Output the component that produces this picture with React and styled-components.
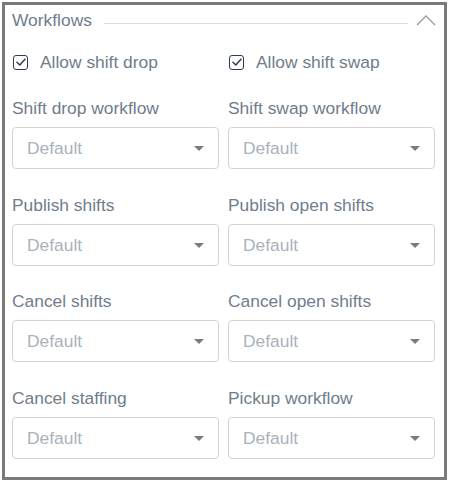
import styled, { createGlobalStyle } from 'styled-components';

const Global = createGlobalStyle`
    body {
        margin: 0;
        background: #ffffff;
        font-family: 'Liberation Sans', Arial, sans-serif;
    }
`;

const Frame = styled.div`
    box-sizing: border-box;
    width: 445px;
    height: 478px;
    margin: 2px 0 0 2px;
    border: 3px solid #7a7a7a;
    padding: 5px 8px 0 7px;
    background: #fff;
`;

const Header = styled.div`
    display: flex;
    align-items: center;
    height: 20px;
    margin-bottom: 22px;
`;

const Title = styled.span`
    font-size: 17.4px;
    line-height: 20px;
    color: #6f7d8c;
`;

const Rule = styled.div`
    flex: 1;
    height: 1px;
    margin: 6px 8px 0 12px;
    background: #dcdcdc;
`;

const Columns = styled.div`
    display: grid;
    grid-template-columns: 207px 207px;
    column-gap: 9px;
    row-gap: ${({ rowGap }) => rowGap || '0px'};
    margin-bottom: ${({ bottom }) => bottom || '0px'};
`;

const CheckLabel = styled.label`
    display: flex;
    align-items: center;
    gap: 12px;
    height: 20px;
    padding-left: 1px;
    font-size: 17.4px;
    color: #6f7d8c;
`;

const Box = styled.span`
    box-sizing: border-box;
    display: flex;
    align-items: center;
    justify-content: center;
    width: 15px;
    height: 15px;
    border: 1.5px solid #2e3d4d;
    border-radius: 3px;
`;

const Field = styled.div`
    display: flex;
    flex-direction: column;
`;

const Label = styled.div`
    font-size: 17.4px;
    line-height: 20px;
    height: 20px;
    padding-top: 1px;
    margin-bottom: 9px;
    color: #6f7d8c;
    white-space: nowrap;
`;

const Select = styled.div`
    box-sizing: border-box;
    display: flex;
    align-items: center;
    justify-content: space-between;
    height: 42px;
    padding: 1px 14px 0 14px;
    border: 1px solid #d3d3d3;
    border-radius: 4px;
    background: #fff;
    font-size: 17.4px;
    color: #a9b2bc;
`;

const Caret = styled.span`
    width: 0;
    height: 0;
    border-left: 5px solid transparent;
    border-right: 5px solid transparent;
    border-top: 5px solid #7b7b7b;
`;

const Check = () => (
    <Box>
        <svg width="10" height="8" viewBox="0 0 10 8">
            <path d="M1 4.2 L3.8 7 L9 1.2" fill="none" stroke="#2e3d4d" strokeWidth="1.5" strokeLinecap="round" strokeLinejoin="round" />
        </svg>
    </Box>
);

const fields = [
    'Shift drop workflow',
    'Shift swap workflow',
    'Publish shifts',
    'Publish open shifts',
    'Cancel shifts',
    'Cancel open shifts',
    'Cancel staffing',
    'Pickup workflow',
];

const App = () => {
    return (
        <>
            <Global />
            <Frame>
                <Header>
                    <Title>Workflows</Title>
                    <Rule />
                    <svg width="20" height="12" viewBox="0 0 20 12">
                        <path d="M1 11 L10 2 L19 11" fill="none" stroke="#9a9a9a" strokeWidth="1.3" />
                    </svg>
                </Header>
                <Columns bottom="25px">
                    <CheckLabel><Check />Allow shift drop</CheckLabel>
                    <CheckLabel><Check />Allow shift swap</CheckLabel>
                </Columns>
                <Columns rowGap="24.7px">
                    {fields.map((name) => (
                        <Field key={name}>
                            <Label>{name}</Label>
                            <Select>
                                Default
                                <Caret />
                            </Select>
                        </Field>
                    ))}
                </Columns>
            </Frame>
        </>
    );
};

export default App;
